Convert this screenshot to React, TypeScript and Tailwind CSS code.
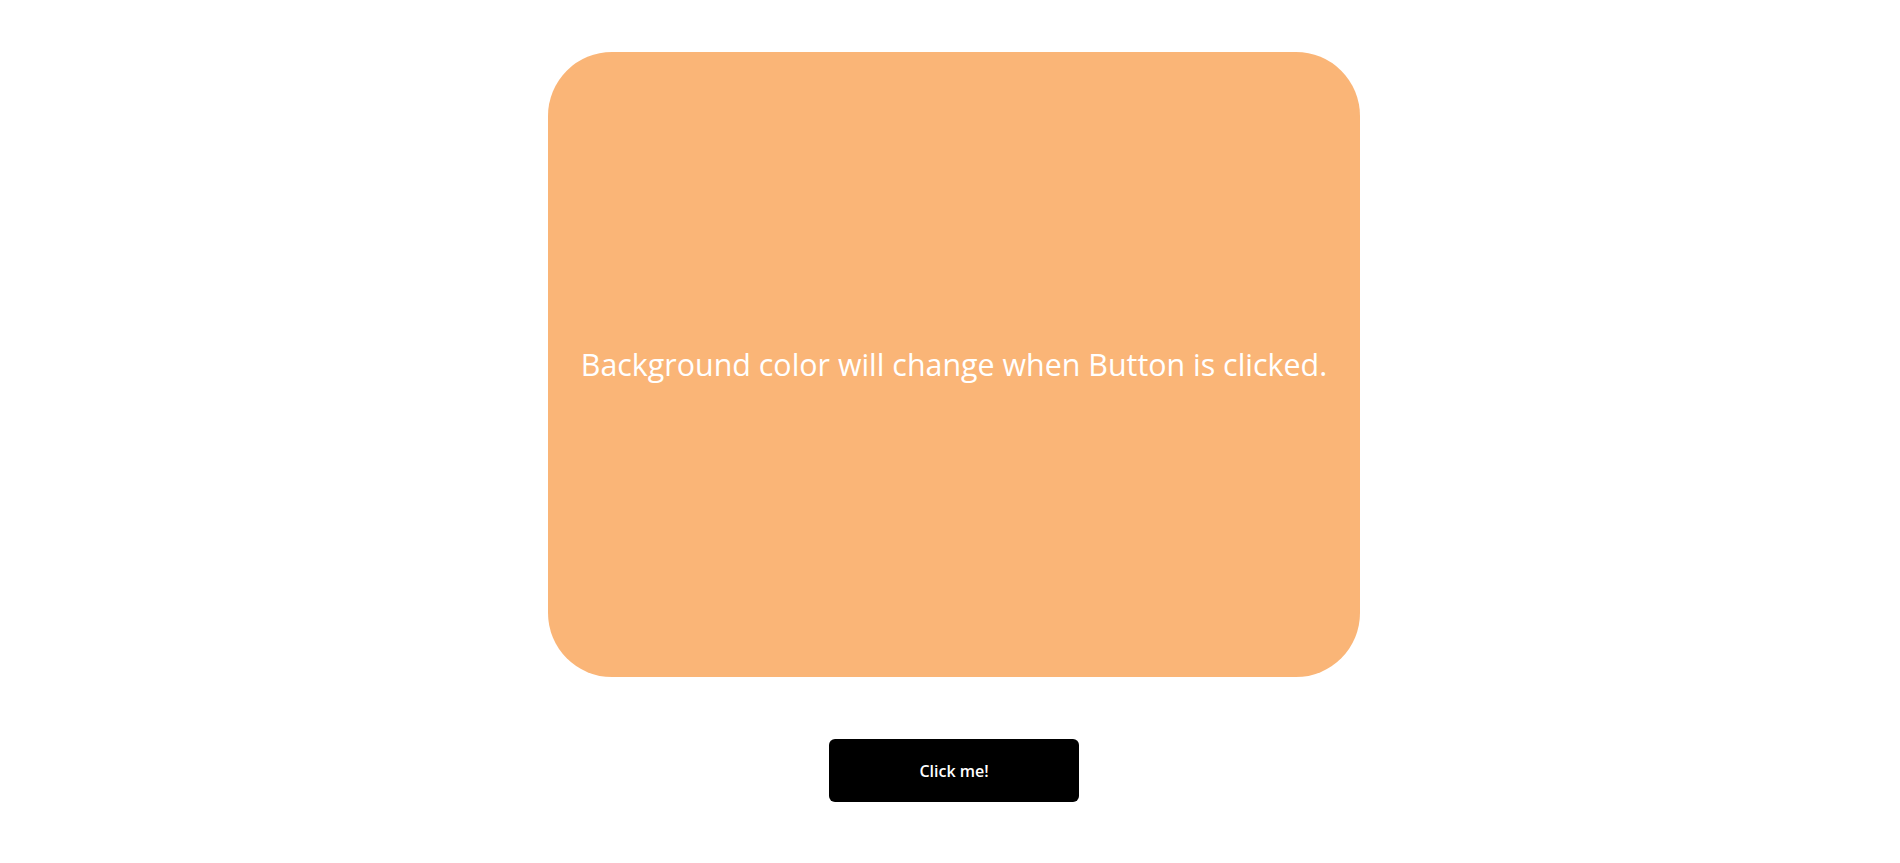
export default function App() {
  return (
    <div className="min-h-screen bg-white flex flex-col items-center pt-[52px] pl-[8px] font-['Open_Sans',sans-serif]">
      <div className="w-[812px] h-[625px] rounded-[64px] bg-[#fab577] flex items-center justify-center">
        <p className="text-[30.4px] text-white">Background color will change when Button is clicked.</p>
      </div>
      <button className="mt-[62px] w-[250px] h-[63px] rounded-[6px] bg-black text-white text-[16px] font-semibold">
        Click me!
      </button>
    </div>
  )
}
